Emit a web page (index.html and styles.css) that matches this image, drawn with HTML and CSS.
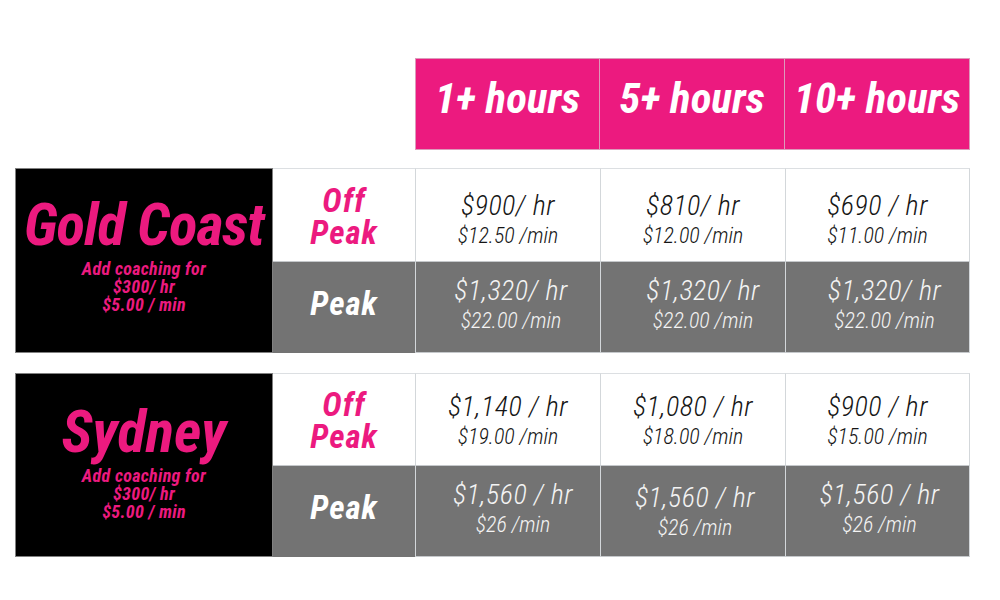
FILE: index.html
```html
<!DOCTYPE html>
<html>
<head>
<meta charset="utf-8">
<link rel="stylesheet" href="styles.css">
</head>
<body>
<div class="page">
  <div class="head-row">
    <div class="spacer"></div>
    <div class="hcell">1+ hours</div>
    <div class="hcell">5+ hours</div>
    <div class="hcell">10+ hours</div>
  </div>

  <div class="block gc">
    <div class="city">
      <div class="city-name">Gold Coast</div>
      <div class="coach">Add coaching for<br>$300/ hr<br>$5.00 / min</div>
    </div>
    <div class="label off">Off<br>Peak</div>
    <div class="price off"><div class="pv"><span class="hr">$900/ hr</span><span class="min">$12.50 /min</span></div></div>
    <div class="price off"><div class="pv"><span class="hr">$810/ hr</span><span class="min">$12.00 /min</span></div></div>
    <div class="price off last"><div class="pv"><span class="hr">$690 / hr</span><span class="min">$11.00 /min</span></div></div>
    <div class="label peak">Peak</div>
    <div class="price peak c1"><div class="pv"><span class="hr">$1,320/ hr</span><span class="min">$22.00 /min</span></div></div>
    <div class="price peak c2"><div class="pv"><span class="hr">$1,320/ hr</span><span class="min">$22.00 /min</span></div></div>
    <div class="price peak c3 last"><div class="pv"><span class="hr">$1,320/ hr</span><span class="min">$22.00 /min</span></div></div>
  </div>

  <div class="block syd">
    <div class="city">
      <div class="city-name">Sydney</div>
      <div class="coach">Add coaching for<br>$300/ hr<br>$5.00 / min</div>
    </div>
    <div class="label off">Off<br>Peak</div>
    <div class="price off"><div class="pv"><span class="hr">$1,140 / hr</span><span class="min">$19.00 /min</span></div></div>
    <div class="price off"><div class="pv"><span class="hr">$1,080 / hr</span><span class="min">$18.00 /min</span></div></div>
    <div class="price off last"><div class="pv"><span class="hr">$900 / hr</span><span class="min">$15.00 /min</span></div></div>
    <div class="label peak">Peak</div>
    <div class="price peak c1"><div class="pv"><span class="hr">$1,560 / hr</span><span class="min">$26 /min</span></div></div>
    <div class="price peak c2"><div class="pv"><span class="hr">$1,560 / hr</span><span class="min">$26 /min</span></div></div>
    <div class="price peak c3 last"><div class="pv"><span class="hr">$1,560 / hr</span><span class="min">$26 /min</span></div></div>
  </div>
</div>
</body>
</html>
```
FILE: styles.css
```css
* { box-sizing: border-box; }
html, body { margin: 0; padding: 0; background: #fff; }
body {
  width: 1000px;
  height: 600px;
  font-family: "Roboto Condensed", Roboto, "Liberation Sans", sans-serif;
  font-style: italic;
}
.page {
  padding: 58px 0 0 15px;
  width: 970px;
}
.head-row {
  display: grid;
  grid-template-columns: 400px 185px 185px 185px;
  height: 92px;
}
.hcell {
  background: #ec1a7f;
  border: 1px solid #dc9bbb;
  border-left: none;
  color: #fff;
  font-weight: 700;
  font-size: 43px;
  display: flex;
  align-items: center;
  justify-content: center;
  padding-bottom: 12px;
}
.hcell:nth-child(2) { border-left: 1px solid #dc9bbb; }

.block {
  display: grid;
  grid-template-columns: 258px 142px 185px 185px 185px;
  grid-template-rows: 93px 92px;
  margin-top: 18px;
}
.block.syd { margin-top: 20px; grid-template-rows: 92px 92px; }

.city {
  grid-row: 1 / span 2;
  background: #000;
  border: 1px solid #808080;
  color: #ec1a7f;
  display: flex;
  flex-direction: column;
  align-items: center;
  justify-content: center;
  text-align: center;
  font-weight: 700;
}
.city-name {
  font-size: 59px;
  line-height: 59px;
  letter-spacing: -1px;
  white-space: nowrap;
}
.coach {
  font-size: 18px;
  line-height: 18px;
  letter-spacing: 0.3px;
  margin-top: 6px;
}
.gc .city { padding-bottom: 12px; }
.syd .city { padding-bottom: 8px; }
.syd .city-name { letter-spacing: 0; }
.syd .coach { margin-top: 6px; }

.label {
  display: flex;
  align-items: center;
  justify-content: center;
  text-align: center;
  font-weight: 700;
  font-size: 33px;
  line-height: 32px;
  letter-spacing: 1px;
}
.label.off {
  background: #fff;
  color: #ec1a7f;
  border-top: 1px solid #dcdfe2;
  padding-top: 3px;
}
.label.peak {
  background: #737373;
  color: #fff;
  border-top: 1px solid #c5c8cb;
  padding-bottom: 7px;
}
.price {
  display: flex;
  align-items: center;
  justify-content: center;
  text-align: center;
  font-weight: 300;
  border-left: 1px solid #d3d7da;
}
.price.last { border-right: 1px solid #d3d7da; }
.price.off {
  background: #fff;
  color: #151515;
  border-top: 1px solid #dcdfe2;
}
.gc .price.off { padding-top: 11px; }
.syd .price.off { padding-top: 4px; }
.price.peak {
  background: #737373;
  color: #f4f4f4;
  border-top: 1px solid #c5c8cb;
  border-bottom: 1px solid #c5c8cb;
  padding-bottom: 2px;
}
.gc .price.c1 { padding-left: 6px; }
.gc .price.c2 { padding-left: 20px; }
.gc .price.c3 { padding-left: 14px; }
.syd .price.c1 { padding-left: 10px; }
.syd .price.c2 { padding-left: 4px; padding-top: 6px; }
.syd .price.c3 { padding-left: 4px; }
.pv {
  display: flex;
  flex-direction: column;
  align-items: center;
}
.hr {
  font-size: 28px;
  line-height: 30px;
  letter-spacing: 0.5px;
}
.min {
  font-size: 22px;
  line-height: 30px;
}
```
